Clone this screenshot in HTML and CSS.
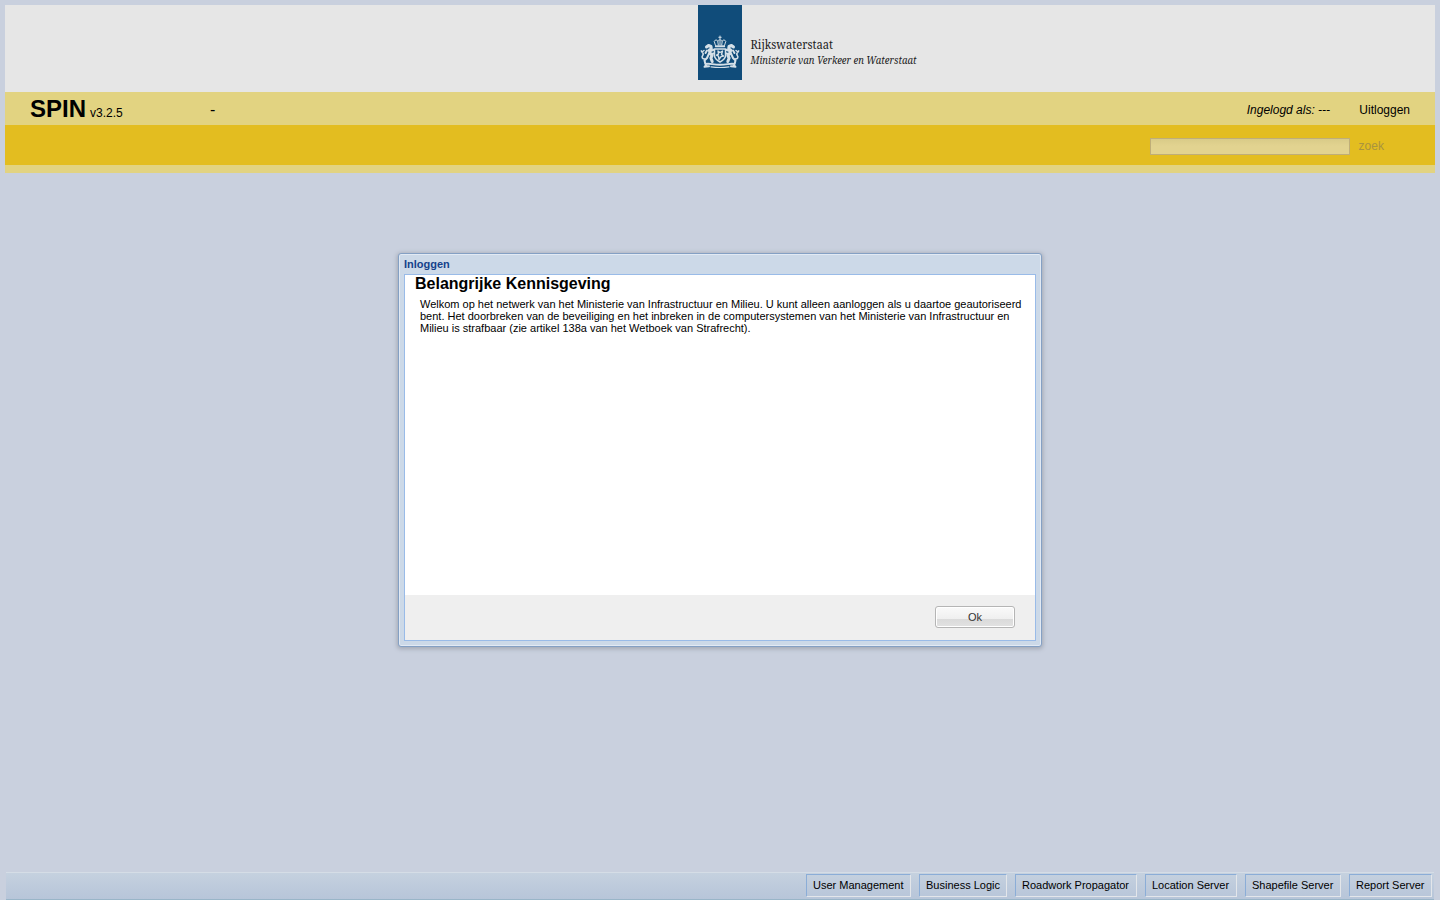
FILE: index.html
```html
<!DOCTYPE html>
<html lang="nl">
<head>
<meta charset="utf-8">
<title>SPIN</title>
<link rel="stylesheet" href="styles.css">
</head>
<body>
<div class="page">
  <header class="banner">
    <svg class="logo" width="260" height="85" viewBox="0 0 260 85">
      <rect width="44" height="75" fill="#104c7a"/>
      <g fill="none" stroke="#d5e0e8" stroke-linecap="round" stroke-linejoin="round">
        <path d="M22 31v3M20.8 32.3h2.4" stroke-width="1"/>
        <path d="M17.5 40.5l-1.3-4.2c1-1.8 3-1.7 3.7 0 .5-2 3.700-2 4.200 0 .7-1.700 2.700-1.800 3.700 0l-1.300 4.200zM19.800 36.500l.5 3.500M24.200 36.500l-.5 3.500M22 35v5" stroke-width="1"/>
        <path d="M17.500 41.500h9" stroke-width="1.300"/>
        <path d="M16.500 44h11v6.500c0 3.500-2.700 5-5.500 6.500-2.800-1.500-5.500-3-5.500-6.500z" stroke-width="1.500"/>
        <path d="M20 46l2 1.500 2.500-1.500-1 3.500 2 1.500-2.500.7-2 3-.5-3.500-2-1 2-1z" stroke-width="1.400"/>
        <g id="lion">
          <path d="M8.500 42l2-1.500 2.500 1 .3 2.300-2 1.200.8 3 2 2.500-1.200 2.500 1.300 3.500" stroke-width="3"/>
          <path d="M11 48.500L9 53l-2.500 2.500.8 3M12.500 46l3.300-1.300M12.500 49.500l3-1M9 45.500L7.500 48" stroke-width="2"/>
          <path d="M7 54c-3 0-3.500-2-2.300-3.500 1-1.300.5-2.500-.7-3.500l-.7-1.200M4 47l2-1.500" stroke-width="1.500"/>
        </g>
        <use href="#lion" transform="translate(44 0) scale(-1 1)"/>
        <path d="M7.500 59c4.500-1 7 .8 14.500 .8s10-1.800 14.500-.8M9 59l-2.500 2.800 4.500-.5M35 59l2.500 2.800-4.500-.5" stroke-width="2"/>
        <path d="M13 61.800c5 .8 13 .8 18 0" stroke-width="1.200"/>
      </g>
      <text class="logo-name" x="52.500" y="44" textLength="82.500" lengthAdjust="spacingAndGlyphs">Rijkswaterstaat</text>
      <text class="logo-ministry" x="52.500" y="59" textLength="166" lengthAdjust="spacingAndGlyphs">Ministerie van Verkeer en Waterstaat</text>
    </svg>
  </header>
  <div class="titlebar">
    <h1 class="app">SPIN</h1>
    <span class="version">v3.2.5</span>
    <span class="context">-</span>
    <span class="user">Ingelogd als: ---</span>
    <a class="logout">Uitloggen</a>
  </div>
  <div class="search">
    <input class="search-input" type="text" disabled aria-label="zoek">
    <span class="search-label">zoek</span>
  </div>
  <div class="strip"></div>
  <main class="workspace">
    <section class="window">
      <div class="window-title">Inloggen</div>
      <div class="window-body">
        <div class="notice">
          <h2 class="notice-title">Belangrijke Kennisgeving</h2>
          <p class="notice-text">Welkom op het netwerk van het Ministerie van Infrastructuur en Milieu. U kunt alleen aanloggen als u daartoe geautoriseerd bent. Het doorbreken van de beveiliging en het inbreken in de computersystemen van het Ministerie van Infrastructuur en Milieu is strafbaar (zie artikel 138a van het Wetboek van Strafrecht).</p>
        </div>
        <div class="window-footer"><button class="ok">Ok</button></div>
      </div>
    </section>
  </main>
  <footer class="statusbar">
    <span class="status w-user">User Management</span>
    <span class="status w-logic">Business Logic</span>
    <span class="status w-roadwork">Roadwork Propagator</span>
    <span class="status w-location">Location Server</span>
    <span class="status w-shape">Shapefile Server</span>
    <span class="status w-report">Report Server</span>
  </footer>
</div>
</body>
</html>
```
FILE: styles.css
```css
* { box-sizing: border-box; }
body {
  margin: 0;
  background: #c9d0de;
  color: #000;
  font-family: "Liberation Sans", Arial, sans-serif;
  font-size: 12px;
}
.page {
  display: flex;
  flex-direction: column;
  height: 900px;
  padding: 5px 5px 0;
  overflow: hidden;
}
.banner { height: 87px; background: #e6e6e6; padding-left: 693px; }
.logo { display: block; overflow: visible; }
.logo-name { font: 12px "Noto Serif", "Liberation Serif", serif; fill: #222; }
.logo-ministry { font: italic 11.5px "Noto Serif", "Liberation Serif", serif; fill: #222; }
.titlebar {
  display: flex;
  height: 33px;
  padding: 0 25px;
  background: #e2d381;
  line-height: 14px;
}
.app { margin: 3px 4px 0 0; font-size: 24px; line-height: 28px; width: 56px; }
.version { margin-top: 14px; width: 120px; }
.context { margin-top: 9px; font-size: 16px; line-height: 18px; }
.user { margin: 11px 29.2px 0 auto; font-style: italic; }
.logout { margin-top: 11px; }
.search {
  display: flex;
  height: 40px;
  padding: 13px 0 0 1145px;
  background: #e3bd20;
}
.search-input {
  width: 200px;
  height: 17px;
  margin: 0 8.6px 0 0;
  padding: 0;
  border: 1px solid #bfae78;
  background: linear-gradient(#d9cb88, #e2d390 7px);
}
.search-label { color: #a9933f; line-height: 16px; }
.strip { height: 8px; background: #e2d381; }
.workspace { flex: 1; padding-top: 80px; }
.window {
  width: 644px;
  height: 394px;
  margin: 0 auto;
  padding: 0 5px;
  border: 1px solid #84a0c4;
  border-radius: 3px;
  background: #ccd9e8;
  box-shadow: inset 0 0 0 1px #e2eaf4, 0 1px 4px 1px #a2a8b5;
}
.window-title {
  height: 20px;
  padding-top: 4px;
  color: #15428b;
  font-size: 11px;
  font-weight: bold;
  line-height: 13px;
}
.window-body {
  display: flex;
  flex-direction: column;
  height: 367px;
  border: 1px solid #99bbe8;
  background: #fff;
}
.notice { flex: 1; padding: 0 10px; }
.notice-title { margin: 0; font-size: 16px; line-height: 18px; }
.notice-text { margin: 5px 0 0 5px; font-size: 11px; line-height: 12px; }
.window-footer {
  display: flex;
  justify-content: flex-end;
  height: 45px;
  padding: 11px 20px 0 0;
  background: #efefef;
}
.ok {
  width: 80px;
  height: 22px;
  padding: 0;
  border: 1px solid #b5b5b5;
  border-radius: 3px;
  background: linear-gradient(#fafafa, #efefef 60%, #dadada 60%, #e2e2e2);
  box-shadow: inset 0 0 0 1px #fff;
  color: #333;
  font: 11px "Liberation Sans", Arial, sans-serif;
}
.statusbar {
  display: flex;
  justify-content: flex-end;
  gap: 8px;
  height: 28px;
  margin: 0 1px;
  padding: 1px 2px 0 0;
  border-top: 1px solid #d5dde6;
  border-bottom: 1px solid #99b5c8;
  background: linear-gradient(#c5d1df, #b7c5d9);
}
.status {
  height: 23px;
  padding-left: 6px;
  border: 1px solid;
  border-color: #8badd7 #e3e6ea #e3e6ea #8badd7;
  font-size: 11px;
  line-height: 21px;
  white-space: nowrap;
}
.w-user { width: 105px; }
.w-logic { width: 88px; }
.w-roadwork { width: 122px; }
.w-location { width: 92px; }
.w-shape { width: 96px; }
.w-report { width: 83px; }
```
